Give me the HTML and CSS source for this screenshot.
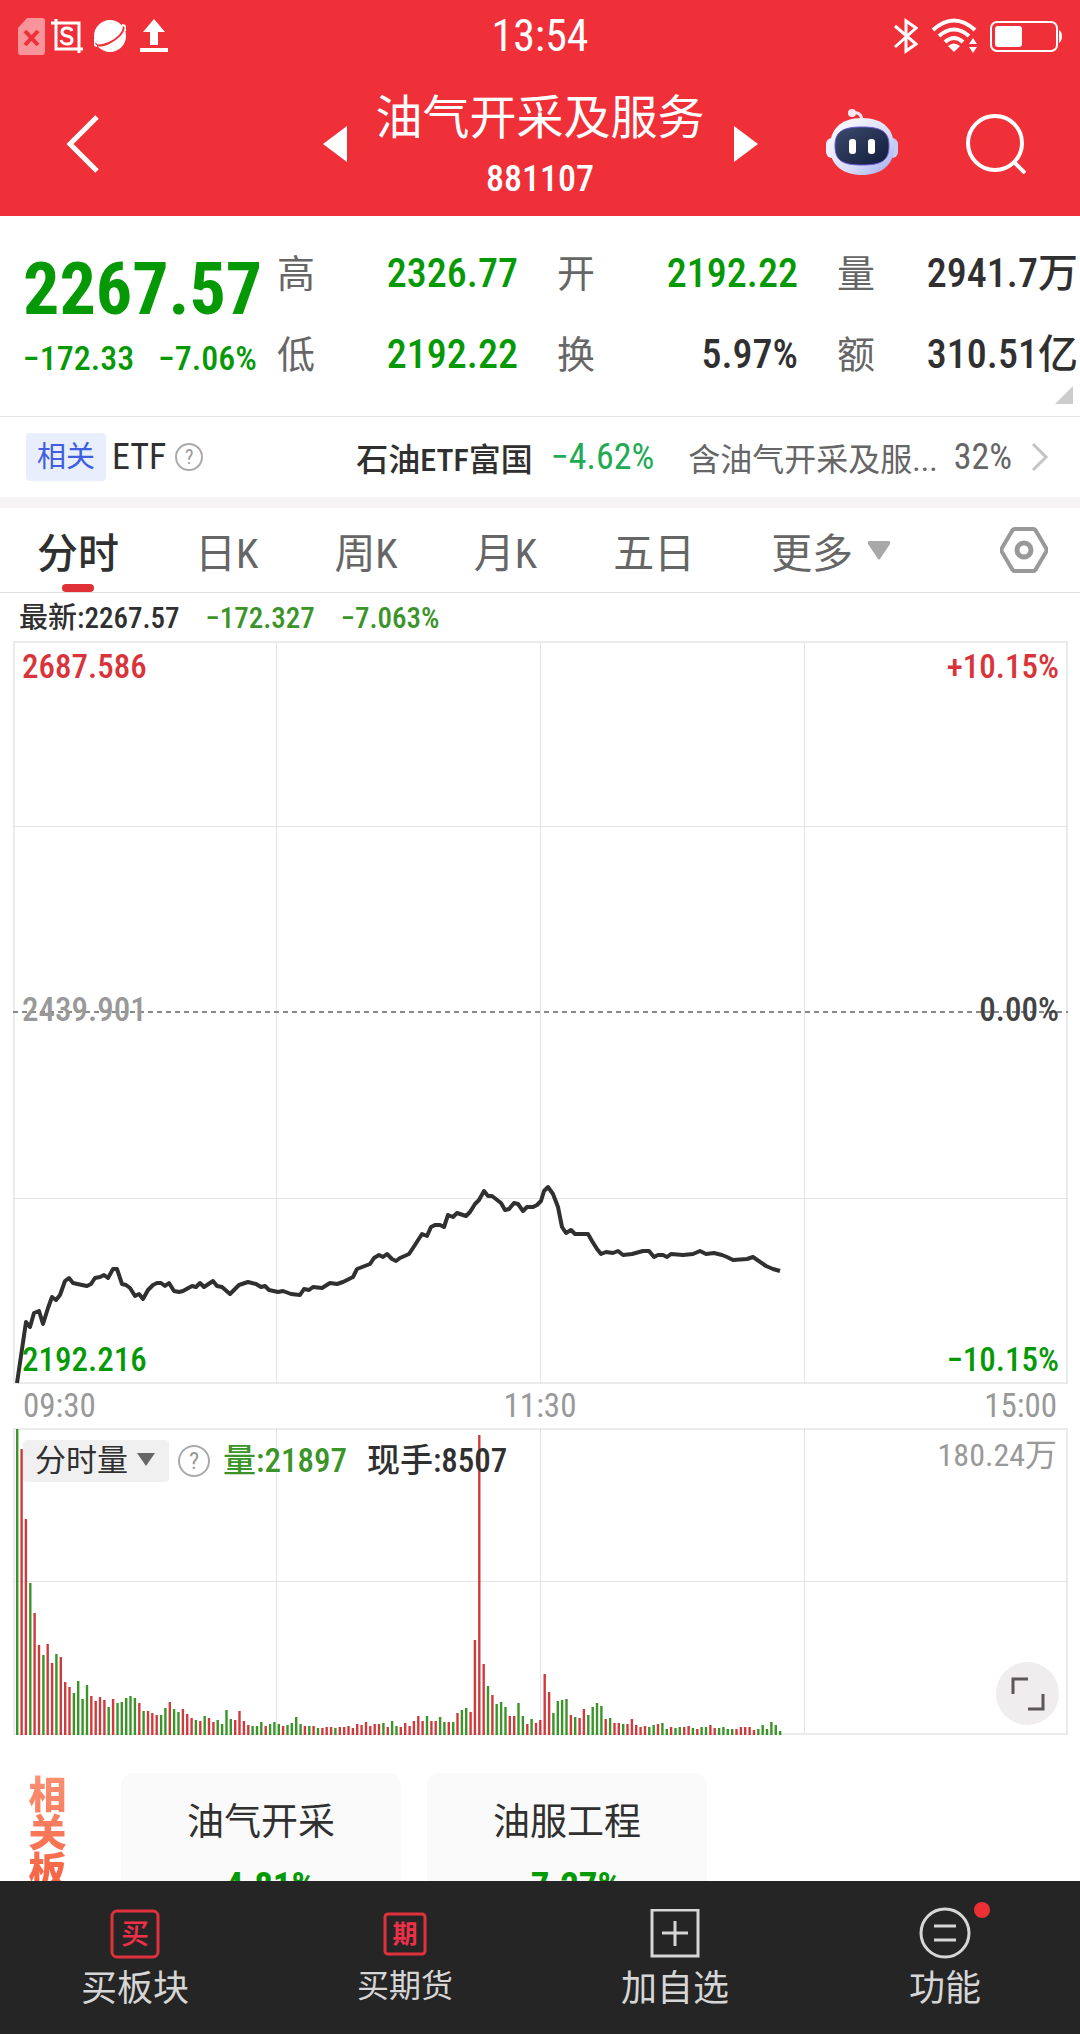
FILE: index.html
```html
<!DOCTYPE html>
<html lang="zh-CN">

<head>
    <meta charset="UTF-8">
    <meta name="viewport" content="width=device-width, initial-scale=1.0">
    <title>油气开采及服务 881107</title>
    <link rel="stylesheet" href="styles.css">
</head>

<body>

    <header class="top">
        <div class="status">
            <div class="status-left">
                <svg width="27" height="37" viewBox="0 0 27 37">
                    <path d="M9 0H24Q27 0 27 3V34Q27 37 24 37H3Q0 37 0 34V10Z" fill="#f9949a" />
                    <path d="M7 13L20 27M20 13L7 27" stroke="#ef3038" stroke-width="4" />
                </svg>
                <svg width="32" height="34" viewBox="0 0 32 34" fill="none" stroke="#fff" stroke-width="3">
                    <path d="M0 4H28V34M5 0V30H32" />
                    <path d="M21 12Q20 9 16 9Q11 9 11 13Q11 16 16 17Q21 18 21 21Q21 25 16 25Q11 25 10 21" />
                </svg>
                <svg class="browser" width="32" height="34" viewBox="0 0 32 34">
                    <circle cx="16" cy="17" r="16" fill="#fff" />
                    <path d="M1 24Q3 29 15 24Q29 17 30 8" fill="none" stroke="#ef3038" stroke-width="2" />
                    <path d="M28 6Q33 6 31 12M1 20Q-1 27 3 27" fill="none" stroke="#fff" stroke-width="2" />
                </svg>
                <svg class="upload" width="28" height="34" viewBox="0 0 28 34" fill="#fff">
                    <path d="M14 0L25 13H18V26H10V13H3ZM0 29H28V33H0Z" />
                </svg>
            </div>
            <span class="clock">13:54</span>
            <div class="status-right">
                <svg width="24" height="36" viewBox="0 0 24 36" fill="none" stroke="#fff" stroke-width="3">
                    <path d="M1 8L22 26L12 33V3L22 10L1 29" />
                </svg>
                <svg width="46" height="36" viewBox="0 0 46 36" fill="none" stroke="#fff" stroke-width="4">
                    <path d="M2 12Q23 -7 44 12M8 18Q23 5 38 18M14 24Q23 16 32 24" />
                    <path d="M17 28Q23 23 29 28L23 34Z" fill="#fff" stroke="none" />
                    <path d="M38 26L42 20L46 26ZM38 29L42 35L46 29Z" fill="#fff" stroke="none" />
                </svg>
                <svg width="72" height="34" viewBox="0 0 72 34">
                    <rect x="1" y="3" width="66" height="29" rx="6" fill="none" stroke="#fff" stroke-width="2" />
                    <rect x="5" y="7" width="27" height="21" rx="3" fill="#fff" />
                    <path d="M69 11Q72 13 72 17Q72 22 69 24Z" fill="#fff" />
                </svg>
            </div>
        </div>

        <div class="navbar">
            <div class="nav-side">
                <button class="back" aria-label="返回">
                    <svg width="34" height="58" viewBox="0 0 34 58" fill="none" stroke="#fff" stroke-width="5">
                        <path d="M31 2L4 29L31 56" />
                    </svg>
                </button>
            </div>
            <div class="switcher">
                <button aria-label="上一个">
                    <svg width="24" height="36" viewBox="0 0 24 36" fill="#fff"><path d="M24 0V36L0 18Z" /></svg>
                </button>
                <div class="title">
                    <h1>油气开采及服务</h1>
                    <p>881107</p>
                </div>
                <button aria-label="下一个">
                    <svg width="24" height="36" viewBox="0 0 24 36" fill="#fff"><path d="M0 0V36L24 18Z" /></svg>
                </button>
            </div>
            <div class="nav-side actions">
                <button aria-label="智能助手">
                    <svg width="72" height="72" viewBox="0 0 72 72">
                        <defs>
                            <linearGradient id="shell" x1="0" y1="0" x2="1" y2="1">
                                <stop offset="0" stop-color="#ffffff" />
                                <stop offset="0.6" stop-color="#d9dcf8" />
                                <stop offset="1" stop-color="#9ba9ee" />
                            </linearGradient>
                            <linearGradient id="face" x1="0" y1="0" x2="1" y2="1">
                                <stop offset="0" stop-color="#3b4a6c" />
                                <stop offset="1" stop-color="#121c3b" />
                            </linearGradient>
                        </defs>
                        <path d="M26 5Q35 3 36 12" fill="none" stroke="#f6e6f2" stroke-width="3" />
                        <circle cx="26" cy="5" r="4" fill="#fbe9f1" />
                        <rect x="0" y="30" width="14" height="20" rx="6" fill="#eef0ff" />
                        <rect x="58" y="30" width="14" height="20" rx="6" fill="#c3ccf8" />
                        <path d="M36 10C58 10 68 22 68 39C68 58 54 67 36 67C18 67 4 58 4 39C4 22 14 10 36 10Z" fill="url(#shell)" />
                        <path d="M36 19C56 19 63 24 63 38C63 53 55 57 36 57C17 57 9 53 9 38C9 24 16 19 36 19Z" fill="url(#face)" stroke="#6858d8" stroke-width="1" />
                        <rect x="23" y="31" width="7" height="15" rx="3" fill="#fff" />
                        <rect x="42" y="31" width="7" height="15" rx="3" fill="#fff" />
                    </svg>
                </button>
                <button aria-label="搜索">
                    <svg width="60" height="60" viewBox="0 0 60 60" fill="none" stroke="#fff" stroke-width="4">
                        <circle cx="29" cy="29" r="27" />
                        <path d="M47 47L59 59" />
                    </svg>
                </button>
            </div>
        </div>
    </header>

    <main>
        <section class="quote">
            <div class="price">
                <strong>2267.57</strong>
                <p><span>−172.33</span><span>−7.06%</span></p>
            </div>
            <dl class="stats">
                <div><dt>高</dt><dd class="down">2326.77</dd></div>
                <div><dt>开</dt><dd class="down">2192.22</dd></div>
                <div><dt>量</dt><dd>2941.7万</dd></div>
                <div><dt>低</dt><dd class="down">2192.22</dd></div>
                <div><dt>换</dt><dd>5.97%</dd></div>
                <div><dt>额</dt><dd>310.51亿</dd></div>
            </dl>
            <span class="corner"></span>
        </section>

        <section class="etf">
            <span class="tag">相关</span>
            <span class="etf-label">ETF</span>
            <button class="help" aria-label="ETF说明">?</button>
            <a href="#etf" class="etf-link">
                <b>石油ETF富国</b>
                <span class="etf-down">−4.62%</span>
                <span class="holding">含油气开采及服...</span>
                <span class="ratio">32%</span>
                <svg width="18" height="30" viewBox="0 0 18 30" fill="none" stroke="#c4c4c4" stroke-width="3">
                    <path d="M2 2L15 15L2 28" />
                </svg>
            </a>
        </section>

        <nav class="tabs">
            <button class="tab active">分时</button>
            <button class="tab">日K</button>
            <button class="tab">周K</button>
            <button class="tab">月K</button>
            <button class="tab">五日</button>
            <button class="tab more">更多
                <svg width="24" height="19" viewBox="0 0 24 19" fill="#a8a8a8"><path d="M2 0H22Q24 1 23 3L13 18Q12 19 11 18L1 3Q0 1 2 0Z" /></svg>
            </button>
            <button class="settings" aria-label="设置">
                <svg width="48" height="46" viewBox="0 0 48 46" fill="none" stroke="#999">
                    <path d="M15 2H33Q35 2 36 4L46 21Q47 23 46 25L36 42Q35 44 33 44H15Q13 44 12 42L2 25Q1 23 2 21L12 4Q13 2 15 2Z" stroke-width="4" />
                    <circle cx="24" cy="23" r="7" stroke-width="5" />
                </svg>
            </button>
        </nav>

        <div class="latest">
            <span>最新:2267.57</span>
            <span class="line-down">−172.327</span>
            <span class="line-down">−7.063%</span>
        </div>

        <div class="chart">
            <svg class="plot" viewBox="0 0 1055 743">
                <g class="grid">
                    <path d="M1 1H1054V742H1Z" />
                    <path d="M263.5 0V743M527.5 0V743M791.5 0V743M0 185.5H1055M0 557.5H1055" />
                </g>
                <path class="zero" d="M0 371H1055" />
                <polyline class="price-line" points="4,742 13,681 17,686 21,672 26,670 30,683 35,667 39,656 43,659 47,654 52,640 56,637 60,642 69,644 74,645 78,643 82,637 87,636 91,634 95,637 100,628 104,628 109,643 113,644 117,647 122,655 126,653 130,658 135,649 140,644 144,642 148,642 152,645 156,642 161,650 166,651 170,650 179,645 183,646 187,642 191,646 200,640 204,645 209,646 217,653 226,644 235,641 243,643 248,646 252,645 256,649 265,651 270,650 278,653 287,654 291,648 296,649 300,646 309,647 317,642 324,643 330,641 340,636 344,628 357,623 361,617 366,614 370,616 374,613 379,618 383,620 387,617 396,613 400,607 409,593 414,595 418,586 422,584 427,584 431,586 435,574 440,576 444,572 453,575 457,571 462,563 466,559 471,550 475,555 479,555 488,562 492,569 496,568 501,562 505,563 510,570 514,566 520,566 524,564 528,560 531,550 535,546 540,553 545,566 549,586 553,592 558,589 562,593 575,593 579,600 584,608 588,613 593,611 600,612 605,610 610,614 619,613 630,610 636,610 641,616 645,614 650,614 654,616 658,613 670,614 680,613 687,610 693,613 701,612 709,614 714,616 720,619 734,618 740,616 753,625 760,628 767,630" />
            </svg>
            <div class="scale">
                <p class="up"><span>2687.586</span><span>+10.15%</span></p>
                <p class="mid"><span>2439.901</span><span>0.00%</span></p>
                <p class="down"><span>2192.216</span><span>−10.15%</span></p>
            </div>
        </div>

        <div class="times">
            <span>09:30</span>
            <span>11:30</span>
            <span>15:00</span>
        </div>

        <div class="chart">
            <svg class="plot" viewBox="0 0 1055 307">
                <g class="grid">
                    <path d="M1 1H1054V306H1Z" />
                    <path d="M263.5 0V307M527.5 0V307M791.5 0V307M0 153.5H1055" />
                </g>
                <g id="bars"></g>
            </svg>
            <div class="volume-bar">
                <div class="picker">
                    <select aria-label="指标">
                        <option>分时量</option>
                        <option>MACD</option>
                    </select>
                    <svg width="18" height="13" viewBox="0 0 18 13" fill="#666"><path d="M0 0H18L9 13Z" /></svg>
                </div>
                <button class="help help-lg" aria-label="分时量说明">?</button>
                <span class="line-down">量:21897</span>
                <span>现手:8507</span>
                <span class="volume-max">180.24万</span>
            </div>
            <button class="expand" aria-label="全屏">
                <svg width="34" height="34" viewBox="0 0 34 34" fill="none" stroke="#5c5759" stroke-width="3">
                    <path d="M2 17V2H17M17 32H32V17" />
                </svg>
            </button>
        </div>

        <section class="related">
            <h2>相关板块</h2>
            <a href="#extract" class="card"><span>油气开采</span><b>−4.81%</b></a>
            <a href="#service" class="card"><span>油服工程</span><b>−7.27%</b></a>
        </section>
    </main>

    <footer class="toolbar">
        <button>
            <svg width="50" height="50" viewBox="0 0 50 50">
                <rect x="2" y="2" width="46" height="46" rx="5" fill="none" stroke="#e0323c" stroke-width="3" />
                <text x="25" y="35" class="glyph">买</text>
            </svg>
            <span>买板块</span>
        </button>
        <button class="small">
            <svg width="50" height="50" viewBox="0 0 50 50">
                <rect x="5" y="5" width="40" height="40" rx="3" fill="none" stroke="#e0323c" stroke-width="3" />
                <text x="25" y="34" class="glyph glyph-sm">期</text>
            </svg>
            <span>买期货</span>
        </button>
        <button>
            <svg width="50" height="50" viewBox="0 0 50 50" fill="none" stroke="#d6d6d6" stroke-width="3">
                <path d="M2 1H48V47H2ZM25 12V37M12 24H38" />
            </svg>
            <span>加自选</span>
        </button>
        <button>
            <svg width="90" height="50" viewBox="0 0 90 50" overflow="visible">
                <circle cx="45" cy="24" r="24" fill="none" stroke="#d6d6d6" stroke-width="3" />
                <path d="M34 17H56M34 31H56" stroke="#d6d6d6" stroke-width="3" />
                <circle cx="82" cy="1" r="8" fill="#ec3036" />
            </svg>
            <span>功能</span>
        </button>
    </footer>

    <script>
        // one entry per minute: g = down, r = up, followed by bar height
        const volumes = `g306 r286 r216 g152 r122 r90 g80 r91 r72 g81 r78 r53 r48 g42 g54 g36 g50 r39 r34 r38
            r35 g28 r36 g32 g33 g37 g39 g37 r32 g24 r24 r22 r20 g20 g27 r33 g26 g23 r26 r21
            r17 g15 r14 g19 r17 r13 g15 g11 g25 g16 r15 r24 r14 r10 g9 g9 g13 r9 g11 g13
            g11 r9 g10 g12 g18 g11 r9 g9 r9 g7 r7 r8 r8 g7 r8 r8 r9 r7 r11 r10
            r13 r9 r11 r11 g12 r8 g14 g9 r8 r12 r9 r14 r19 r14 g19 r14 r14 g18 g13 r13
            g13 r22 g25 g27 r23 r95 r300 r71 g49 r40 g31 g33 g28 r19 r19 g32 g19 r11 g16 r12
            r15 r61 r43 g22 g34 g35 g36 r20 g18 r17 r26 g20 g28 g32 g29 r16 g17 r12 r12 g11
            r11 r16 r10 r8 r9 g8 g10 r11 g12 g6 r8 g7 g8 r8 r9 g7 r6 g8 g8 r10
            r7 g7 g8 g6 g6 r6 r8 r8 r8 r5 g6 g10 g6 g13 g10 g4`.split(/\s+/);

        const step = 1055 / 242;
        document.getElementById('bars').innerHTML = volumes.map((v, i) => {
            const height = Number(v.slice(1));
            const x = (3 + i * step).toFixed(1);
            return `<rect class="bar-${v[0]}" x="${x}" y="${307 - height}" width="2.4" height="${height}" />`;
        }).join('');
    </script>

</body>

</html>
```
FILE: styles.css
```css
* {
    box-sizing: border-box;
    margin: 0;
    padding: 0;
}

body {
    height: 100vh;
    display: flex;
    flex-direction: column;
    font-family: "Roboto Condensed", "Liberation Sans Narrow", Roboto, "Noto Sans CJK SC", sans-serif;
    background-color: #fff;
    color: #303030;
}

button {
    font: inherit;
    color: inherit;
    background: none;
    border: none;
    cursor: pointer;
}

a {
    color: inherit;
    text-decoration: none;
}

svg {
    display: block;
}

/* Header */
.top {
    background-color: #ef3038;
    color: #fff;
}

.status {
    height: 72px;
    padding: 0 18px;
    display: grid;
    grid-template-columns: 1fr auto 1fr;
    align-items: center;
}

.status-left,
.status-right {
    display: flex;
    align-items: center;
    gap: 6px;
}

.browser {
    margin-left: 5px;
}

.upload {
    margin-left: 8px;
}

.status-right {
    justify-content: flex-end;
    gap: 13px;
}

.clock {
    font-size: 44px;
}

.navbar {
    height: 144px;
    padding: 0 54px;
    display: flex;
    align-items: center;
}

.nav-side {
    flex: 1;
    display: flex;
}

.back {
    margin-left: 12px;
}

.actions {
    justify-content: flex-end;
    align-items: center;
    gap: 68px;
}

.switcher {
    display: flex;
    align-items: center;
    gap: 29px;
}

.title {
    padding-top: 10px;
    text-align: center;
}

.title h1 {
    font-size: 47px;
    font-weight: 400;
    line-height: 60px;
}

.title p {
    font-size: 36px;
    font-weight: 500;
    line-height: 62px;
}

main {
    flex: 1;
    min-height: 0;
    overflow: hidden;
}

/* Quote */
.quote {
    position: relative;
    display: flex;
    height: 201px;
    padding: 34px 2px 0 23px;
    border-bottom: 1px solid #e6e6e6;
}

.price {
    width: 254px;
    color: #069906;
}

.price strong {
    display: block;
    font-size: 72px;
    font-weight: 700;
    line-height: 80px;
}

.price p {
    display: flex;
    gap: 24px;
    font-size: 34px;
    font-weight: 500;
    line-height: 56px;
}

.stats {
    flex: 1;
    display: grid;
    grid-template-columns: repeat(3, 1fr);
    column-gap: 39px;
    row-gap: 33px;
    align-content: start;
}

.stats div {
    display: flex;
    justify-content: space-between;
    line-height: 48px;
    white-space: nowrap;
}

.stats dt {
    font-size: 38px;
    color: #666;
}

.stats dd {
    font-size: 40px;
    font-weight: 500;
}

.down,
.stats .down {
    color: #069906;
}

.up {
    color: #d8343a;
}

.line-down {
    color: #3a9428;
}

.corner {
    position: absolute;
    right: 7px;
    bottom: 12px;
    border-left: 18px solid transparent;
    border-bottom: 18px solid #ccc;
}

/* ETF row */
.etf {
    display: flex;
    align-items: center;
    height: 91px;
    padding: 0 31px 0 26px;
    border-bottom: 11px solid #f8f3f4;
    font-size: 32px;
    white-space: nowrap;
}

.tag {
    padding: 0 11px;
    border-radius: 4px;
    background-color: #e8eefb;
    color: #3f5fe0;
    font-size: 29px;
    line-height: 48px;
}

.etf-label {
    margin: 0 9px 0 6px;
    font-size: 36px;
}

.help {
    width: 28px;
    height: 28px;
    border: 2px solid #aaa;
    border-radius: 50%;
    color: #999;
    font-size: 20px;
    line-height: 24px;
}

.help-lg {
    width: 32px;
    height: 32px;
    font-size: 24px;
    line-height: 28px;
}

.etf-link {
    margin-left: auto;
    display: flex;
    align-items: center;
}

.etf-link b {
    font-weight: 500;
}

.etf-down {
    margin: 0 34px 0 18px;
    color: #22aa55;
    font-size: 36px;
}

.holding,
.ratio {
    color: #666;
}

.ratio {
    margin: 0 19px 0 16px;
    font-size: 36px;
}

/* Period tabs */
.tabs {
    display: flex;
    align-items: center;
    gap: 76px;
    height: 85px;
    padding: 0 32px 0 37px;
    border-bottom: 1px solid #dedede;
}

.tab {
    position: relative;
    height: 84px;
    font-size: 41px;
    color: #666;
}

.active {
    color: #303030;
    font-weight: 500;
}

.active::after {
    content: "";
    position: absolute;
    left: 50%;
    bottom: 0;
    width: 32px;
    height: 8px;
    margin-left: -16px;
    border-radius: 4px;
    background-color: #e03236;
}

.more {
    display: flex;
    align-items: center;
    gap: 14px;
}

.settings {
    margin-left: auto;
}

.latest {
    display: flex;
    gap: 26px;
    padding: 2px 19px 0;
    font-size: 29px;
    font-weight: 500;
    line-height: 46px;
}

/* Charts */
.chart {
    position: relative;
    margin: 0 12px 0 13px;
}

.plot {
    width: 100%;
    height: auto;
}

.grid path {
    fill: none;
    stroke: #e4e4e4;
    stroke-width: 1;
}

.grid path:first-child {
    stroke: #ebebeb;
    stroke-width: 2;
}

.zero {
    stroke: #888;
    stroke-width: 2;
    stroke-dasharray: 5 4;
}

.price-line {
    fill: none;
    stroke: #303030;
    stroke-width: 4;
    stroke-linejoin: round;
}

.bar-g {
    fill: #3a9428;
}

.bar-r {
    fill: #d03a3c;
}

.scale {
    position: absolute;
    inset: 6px 9px 4px;
    display: flex;
    flex-direction: column;
    justify-content: space-between;
    font-size: 33px;
    font-weight: 500;
    line-height: 40px;
}

.scale p,
.times {
    display: flex;
    justify-content: space-between;
}

.mid {
    padding-bottom: 8px;
    color: #444;
}

.mid span:first-child {
    color: #999;
}

.times {
    padding: 0 23px;
    font-size: 33px;
    line-height: 44px;
    color: #999;
}

.volume-bar {
    position: absolute;
    top: 11px;
    left: 10px;
    right: 11px;
    display: flex;
    align-items: center;
    font-size: 33px;
    font-weight: 500;
    line-height: 42px;
}

.picker {
    position: relative;
}

.picker select {
    width: 146px;
    height: 42px;
    padding-left: 12px;
    border: none;
    border-radius: 4px;
    background-color: #f0f0f0;
    appearance: none;
    font: inherit;
    font-size: 31px;
    font-weight: 400;
    color: #303030;
}

.picker svg {
    position: absolute;
    right: 14px;
    top: 14px;
    pointer-events: none;
}

.volume-bar .help {
    margin: 0 13px 0 9px;
    font-weight: 400;
}

.volume-bar .line-down {
    margin-right: 20px;
}

.volume-max {
    align-self: flex-start;
    margin-left: auto;
    color: #999;
    font-size: 32px;
    font-weight: 400;
    line-height: 32px;
}

.expand {
    position: absolute;
    right: 9px;
    bottom: 10px;
    width: 63px;
    height: 63px;
    display: flex;
    align-items: center;
    justify-content: center;
    border-radius: 50%;
    background-color: #efedee;
}

/* Related sectors */
.related {
    display: flex;
    align-items: flex-start;
    gap: 26px;
    padding: 38px 25px 0;
}

.related h2 {
    width: 70px;
    writing-mode: vertical-rl;
    padding: 2px 32px 0 0;
    font-size: 38px;
    font-weight: 900;
    line-height: 38px;
    background: linear-gradient(#fa9274, #f4502e);
    background-clip: text;
    -webkit-background-clip: text;
    color: transparent;
}

.card {
    width: 280px;
    padding-top: 22px;
    border-radius: 12px;
    background-color: #fafafa;
    text-align: center;
}

.card span,
.card b {
    display: block;
    font-size: 37px;
    line-height: 56px;
}

.card b {
    line-height: 70px;
    color: #069906;
}

/* Bottom toolbar */
.toolbar {
    display: grid;
    grid-template-columns: repeat(4, 1fr);
    height: 153px;
    background-color: #252525;
}

.toolbar button {
    display: flex;
    flex-direction: column;
    align-items: center;
    padding-top: 28px;
    color: #d6d6d6;
    font-size: 36px;
    line-height: 60px;
}

.toolbar .small {
    font-size: 32px;
    line-height: 54px;
}

.glyph {
    fill: #ee3048;
    font-size: 28px;
    font-weight: 500;
    text-anchor: middle;
}

.glyph-sm {
    font-size: 25px;
    font-weight: 700;
}
```
